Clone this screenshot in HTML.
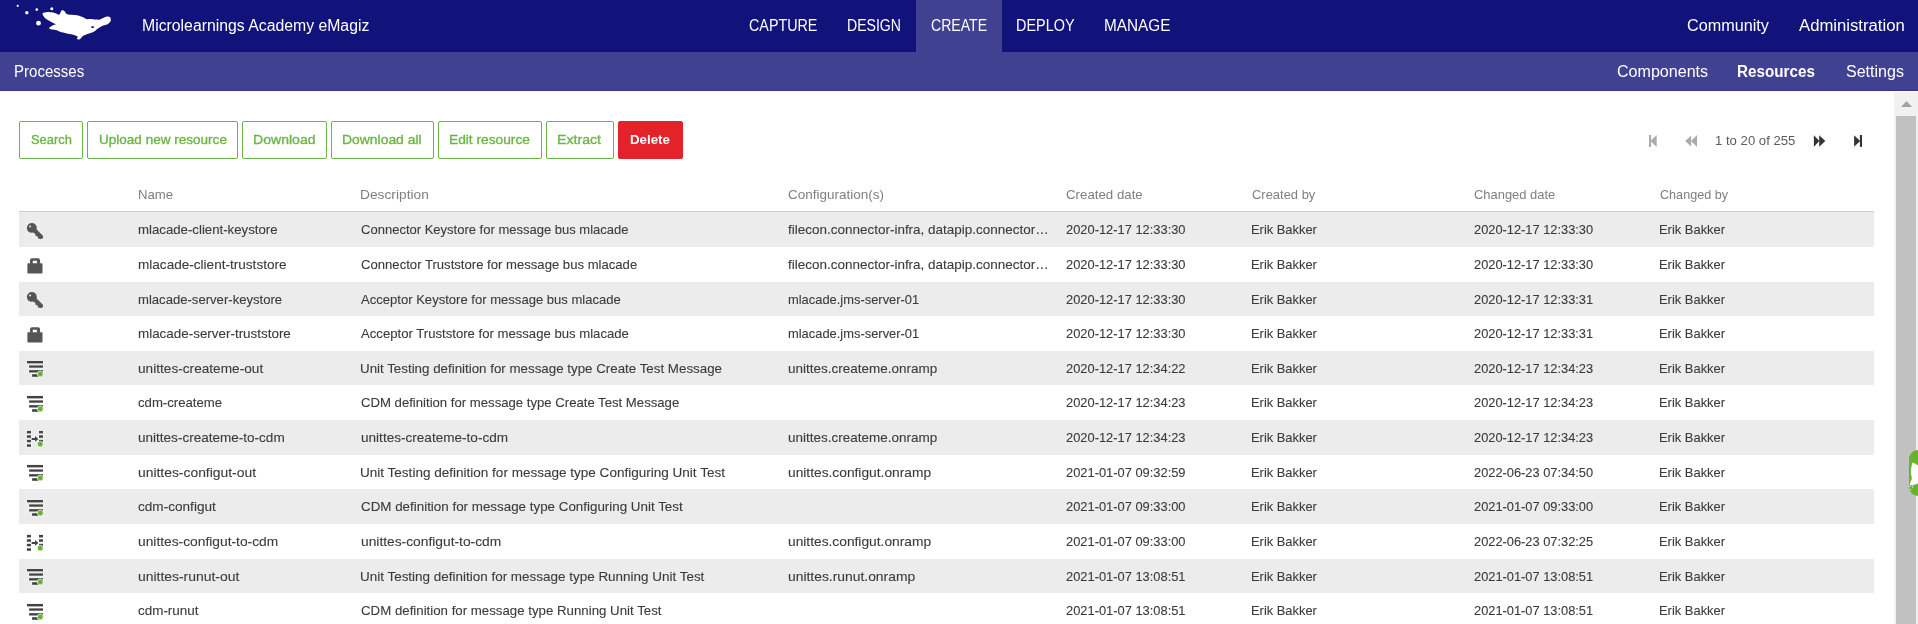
<!DOCTYPE html>
<html><head><meta charset="utf-8"><title>Resources - eMagiz</title>
<style>
html,body{margin:0;padding:0;width:1918px;height:624px;overflow:hidden;background:#fff;}
body{position:relative;font-family:"Liberation Sans",sans-serif;}
.t{position:absolute;white-space:nowrap;transform-origin:0 0;}
#tx{position:absolute;left:0;top:0;width:1918px;height:624px;will-change:transform;}
.bar{position:absolute;left:0;width:1918px;}
.btn{position:absolute;top:121px;height:38px;box-sizing:border-box;border:1.6px solid #6ab545;border-radius:2px;}
.row{position:absolute;left:19px;width:1855px;background:#ececec;}
.ic{position:absolute;overflow:visible;}
.s0{font-size:16px;line-height:16px;font-weight:400;color:#fff;}
.s1{font-size:16px;line-height:16px;font-weight:700;color:#fff;}
.s2{font-size:13.5px;line-height:13.5px;font-weight:400;color:#6ab545;-webkit-text-stroke:0.35px #6ab545;}
.s3{font-size:13.5px;line-height:13.5px;font-weight:700;color:#fff;}
.s4{font-size:13px;line-height:13px;font-weight:400;color:#5c5c5c;}
.s5{font-size:13px;line-height:13px;font-weight:400;color:#7f7f7f;}
.s6{font-size:13px;line-height:13px;font-weight:400;color:#3b3b3b;-webkit-text-stroke:0.1px #3b3b3b;}
</style></head><body>
<div class="bar" style="top:0;height:52px;background:#11127a"></div>
<div class="bar" style="top:52px;height:39px;background:#414191"></div>
<div class="bar" style="top:90px;height:1px;background:#37378c"></div>
<div style="position:absolute;left:916px;top:0;width:86px;height:52px;background:#414191"></div>
<svg style="position:absolute;left:0;top:0" width="130" height="52" viewBox="0 0 130 52">
<g fill="#fff">
<circle cx="17.7" cy="5.8" r="1.1"/><circle cx="26.8" cy="12.7" r="1.7"/><circle cx="36.8" cy="9.6" r="1.3"/><circle cx="51.8" cy="8.75" r="1.5"/><circle cx="38.5" cy="23.2" r="2.4"/>
<path d="M42.50,13.75 C42.70,13.30 43.23,12.81 44.20,12.50 C45.17,12.19 46.78,11.90 48.30,11.90 C49.82,11.90 51.77,12.12 53.30,12.50 C54.83,12.88 56.48,13.85 57.50,14.20 C58.52,14.55 58.88,14.93 59.40,14.60 C59.92,14.27 60.25,12.88 60.60,12.20 C60.95,11.52 61.05,10.82 61.50,10.50 C61.95,10.18 62.68,10.07 63.30,10.30 C63.92,10.53 64.63,11.28 65.20,11.90 C65.77,12.52 65.77,13.52 66.70,14.00 C67.63,14.48 69.13,14.60 70.80,14.80 C72.47,15.00 74.75,14.85 76.70,15.20 C78.65,15.55 80.83,16.27 82.50,16.90 C84.17,17.53 85.45,18.63 86.70,19.00 C87.95,19.37 88.48,19.00 90.00,19.10 C91.52,19.20 94.13,19.53 95.80,19.60 C97.47,19.67 98.60,19.85 100.00,19.50 C101.40,19.15 102.82,17.98 104.20,17.50 C105.58,17.02 107.25,16.52 108.30,16.60 C109.35,16.68 110.12,17.23 110.50,18.00 C110.88,18.77 111.10,20.22 110.60,21.25 C110.10,22.28 108.85,23.44 107.50,24.20 C106.15,24.96 104.03,25.12 102.50,25.80 C100.97,26.48 99.68,27.35 98.30,28.30 C96.92,29.25 95.87,30.59 94.20,31.50 C92.53,32.41 90.12,33.03 88.30,33.75 C86.48,34.47 84.47,35.11 83.30,35.80 C82.12,36.49 82.01,37.27 81.25,37.90 C80.49,38.53 79.47,39.50 78.75,39.60 C78.03,39.70 77.11,39.02 76.90,38.50 C76.69,37.98 78.23,37.18 77.50,36.50 C76.77,35.82 74.30,34.92 72.50,34.40 C70.70,33.88 68.78,33.83 66.70,33.40 C64.62,32.97 61.67,32.32 60.00,31.80 C58.33,31.28 58.08,30.67 56.70,30.30 C55.32,29.93 52.95,29.88 51.70,29.60 C50.45,29.32 49.52,28.98 49.20,28.60 C48.88,28.22 49.25,27.83 49.80,27.30 C50.35,26.77 51.50,25.92 52.50,25.40 C53.50,24.88 55.67,24.62 55.80,24.20 C55.93,23.78 54.40,23.47 53.30,22.90 C52.20,22.33 50.58,21.63 49.20,20.80 C47.82,19.97 46.03,18.83 45.00,17.90 C43.97,16.97 43.42,15.89 43.00,15.20 C42.58,14.51 42.30,14.20 42.50,13.75Z"/>
</g>
<ellipse cx="92.6" cy="27.1" rx="1.6" ry="0.85" fill="#11127a"/>
</svg>

<div class="btn" style="left:19px;width:64px"></div>
<div class="btn" style="left:87px;width:151px"></div>
<div class="btn" style="left:242px;width:85px"></div>
<div class="btn" style="left:331px;width:103px"></div>
<div class="btn" style="left:438px;width:104px"></div>
<div class="btn" style="left:546px;width:68px"></div>
<div class="btn" style="left:618px;width:65px;background:#e3222a;border-color:#e3222a"></div>
<svg style="position:absolute;left:1640px;top:128px" width="230" height="26" viewBox="1640 128 230 26">
<g fill="#ababab"><rect x="1649" y="135" width="2.1" height="11.9"/><path d="M1650.4 141 L1656.7 135 V146.9 Z"/>
<path d="M1685.2 141 L1691.2 135.6 V146.5 Z"/><path d="M1691 141 L1697 135 V146.9 Z"/></g>
<g fill="#333"><path d="M1813.9 135.3 L1819.4 141 L1813.9 146.8 Z"/><path d="M1819.2 135.3 L1825.3 141 L1819.2 146.8 Z"/>
<path d="M1854.1 135.3 L1860.2 141 L1854.1 146.8 Z"/><rect x="1859.9" y="135" width="2.1" height="11.9"/></g>
</svg>
<div style="position:absolute;left:19px;top:211px;width:1855px;height:1px;background:#cccfd5"></div>
<div class="row" style="top:212.300px;height:34.636px"></div>
<div class="row" style="top:281.572px;height:34.636px"></div>
<div class="row" style="top:350.844px;height:34.636px"></div>
<div class="row" style="top:420.116px;height:34.636px"></div>
<div class="row" style="top:489.388px;height:34.636px"></div>
<div class="row" style="top:558.660px;height:34.636px"></div>
<svg class="ic" style="left:19px;top:213px" width="30" height="35" viewBox="0 0.35 30 35"><g fill="#555555"><circle cx="12.85" cy="15.25" r="4.95"/><path d="M14.3 13.6 L23.9 23.1 L24.1 25.4 L21.6 26.6 L20.7 25.9 L19.9 26.3 L18.7 25.1 L19.0 24.4 L18.0 23.4 L17.3 23.7 L16.3 22.7 L16.6 21.9 L11.3 16.7 Z"/></g><circle cx="11.15" cy="13.85" r="1.05" fill="#e6e6e6"/></svg>
<svg class="ic" style="left:19px;top:247px" width="30" height="35" viewBox="0 0.15 30 35"><g fill="#555555"><rect x="8.4" y="16.5" width="15.1" height="10.1" rx="0.8"/><path d="M11 17 V13.3 Q11 11.3 13 11.3 H19 Q21 11.3 21 13.3 V17 H17.9 V13.8 H13.8 V17 Z"/></g></svg>
<svg class="ic" style="left:19px;top:282px" width="30" height="35" viewBox="0 0.35 30 35"><g fill="#555555"><circle cx="12.85" cy="15.25" r="4.95"/><path d="M14.3 13.6 L23.9 23.1 L24.1 25.4 L21.6 26.6 L20.7 25.9 L19.9 26.3 L18.7 25.1 L19.0 24.4 L18.0 23.4 L17.3 23.7 L16.3 22.7 L16.6 21.9 L11.3 16.7 Z"/></g><circle cx="11.15" cy="13.85" r="1.05" fill="#e6e6e6"/></svg>
<svg class="ic" style="left:19px;top:316px" width="30" height="35" viewBox="0 0.15 30 35"><g fill="#555555"><rect x="8.4" y="16.5" width="15.1" height="10.1" rx="0.8"/><path d="M11 17 V13.3 Q11 11.3 13 11.3 H19 Q21 11.3 21 13.3 V17 H17.9 V13.8 H13.8 V17 Z"/></g></svg>
<svg class="ic" style="left:19px;top:351px" width="30" height="35" viewBox="0 0.25 30 35"><g fill="#434343" stroke="#fff" stroke-width="0.9" paint-order="stroke"><rect x="8" y="10.2" width="16" height="2.45"/><rect x="10.1" y="14.65" width="13.9" height="2.3"/><rect x="10.1" y="19.4" width="13.9" height="2.35"/><rect x="13.1" y="23.45" width="6" height="2.6"/></g><circle cx="21.3" cy="23.2" r="2.95" fill="#66b32e" stroke="#fff" stroke-width="0.7"/></svg>
<svg class="ic" style="left:19px;top:386px" width="30" height="35" viewBox="0 0.25 30 35"><g fill="#434343" stroke="#fff" stroke-width="0.9" paint-order="stroke"><rect x="8" y="10.2" width="16" height="2.45"/><rect x="10.1" y="14.65" width="13.9" height="2.3"/><rect x="10.1" y="19.4" width="13.9" height="2.35"/><rect x="13.1" y="23.45" width="6" height="2.6"/></g><circle cx="21.3" cy="23.2" r="2.95" fill="#66b32e" stroke="#fff" stroke-width="0.7"/></svg>
<svg class="ic" style="left:19px;top:420px" width="30" height="35" viewBox="0 -0.0 30 35"><g fill="#434343" stroke="#fff" stroke-width="0.9" paint-order="stroke"><rect x="7.9" y="10.9" width="4.1" height="2.5"/><rect x="7.9" y="15.3" width="4.1" height="2.5"/><rect x="7.9" y="19.8" width="4.1" height="2.5"/><rect x="7.9" y="24.3" width="4.1" height="2.5"/><rect x="20" y="10.9" width="4" height="2.5"/><rect x="20" y="15.3" width="4" height="2.5"/><rect x="20" y="19.8" width="4" height="2.5"/><path d="M12.6 18 H16 V16 L19.4 18.9 L16 21.7 V19.9 H12.6 Z"/></g><circle cx="21.2" cy="24.1" r="2.95" fill="#66b32e" stroke="#fff" stroke-width="0.7"/></svg>
<svg class="ic" style="left:19px;top:455px" width="30" height="35" viewBox="0 0.25 30 35"><g fill="#434343" stroke="#fff" stroke-width="0.9" paint-order="stroke"><rect x="8" y="10.2" width="16" height="2.45"/><rect x="10.1" y="14.65" width="13.9" height="2.3"/><rect x="10.1" y="19.4" width="13.9" height="2.35"/><rect x="13.1" y="23.45" width="6" height="2.6"/></g><circle cx="21.3" cy="23.2" r="2.95" fill="#66b32e" stroke="#fff" stroke-width="0.7"/></svg>
<svg class="ic" style="left:19px;top:490px" width="30" height="35" viewBox="0 0.25 30 35"><g fill="#434343" stroke="#fff" stroke-width="0.9" paint-order="stroke"><rect x="8" y="10.2" width="16" height="2.45"/><rect x="10.1" y="14.65" width="13.9" height="2.3"/><rect x="10.1" y="19.4" width="13.9" height="2.35"/><rect x="13.1" y="23.45" width="6" height="2.6"/></g><circle cx="21.3" cy="23.2" r="2.95" fill="#66b32e" stroke="#fff" stroke-width="0.7"/></svg>
<svg class="ic" style="left:19px;top:524px" width="30" height="35" viewBox="0 -0.0 30 35"><g fill="#434343" stroke="#fff" stroke-width="0.9" paint-order="stroke"><rect x="7.9" y="10.9" width="4.1" height="2.5"/><rect x="7.9" y="15.3" width="4.1" height="2.5"/><rect x="7.9" y="19.8" width="4.1" height="2.5"/><rect x="7.9" y="24.3" width="4.1" height="2.5"/><rect x="20" y="10.9" width="4" height="2.5"/><rect x="20" y="15.3" width="4" height="2.5"/><rect x="20" y="19.8" width="4" height="2.5"/><path d="M12.6 18 H16 V16 L19.4 18.9 L16 21.7 V19.9 H12.6 Z"/></g><circle cx="21.2" cy="24.1" r="2.95" fill="#66b32e" stroke="#fff" stroke-width="0.7"/></svg>
<svg class="ic" style="left:19px;top:559px" width="30" height="35" viewBox="0 0.25 30 35"><g fill="#434343" stroke="#fff" stroke-width="0.9" paint-order="stroke"><rect x="8" y="10.2" width="16" height="2.45"/><rect x="10.1" y="14.65" width="13.9" height="2.3"/><rect x="10.1" y="19.4" width="13.9" height="2.35"/><rect x="13.1" y="23.45" width="6" height="2.6"/></g><circle cx="21.3" cy="23.2" r="2.95" fill="#66b32e" stroke="#fff" stroke-width="0.7"/></svg>
<svg class="ic" style="left:19px;top:594px" width="30" height="35" viewBox="0 0.25 30 35"><g fill="#434343" stroke="#fff" stroke-width="0.9" paint-order="stroke"><rect x="8" y="10.2" width="16" height="2.45"/><rect x="10.1" y="14.65" width="13.9" height="2.3"/><rect x="10.1" y="19.4" width="13.9" height="2.35"/><rect x="13.1" y="23.45" width="6" height="2.6"/></g><circle cx="21.3" cy="23.2" r="2.95" fill="#66b32e" stroke="#fff" stroke-width="0.7"/></svg>
<div style="position:absolute;left:1894px;top:92px;width:24px;height:532px;background:#f1f1f1"></div>
<svg style="position:absolute;left:1894px;top:92px" width="24" height="24"><path d="M7 15 L12.5 9 L18 15 Z" fill="#a3a3a3"/></svg>
<div style="position:absolute;left:1896px;top:116px;width:20px;height:508px;background:#c1c1c1"></div>
<div style="position:absolute;left:1909px;top:450px;width:18px;height:46px;border-radius:9px;background:#66b32e"></div>
<svg style="position:absolute;left:1909px;top:450px" width="9" height="46"><g fill="#fff"><path d="M3.5 12.5 L6 13.6 L9 15.4 L9 33.5 L6 34.6 L3.5 35.6 L0.7 34.9 L1.4 32 L2.6 29.5 L2.8 27.7 L2.1 24.5 L1.8 21.9 L2.1 18.5 L2.5 16.1 Z"/><circle cx="0.9" cy="36.4" r="0.6"/><circle cx="3.5" cy="37.1" r="0.6"/><circle cx="1.6" cy="39.5" r="0.55"/></g></svg>
<div id="tx">
<div class="t s0" style="left:141.81px;top:17.50px;transform:scaleX(0.9870)">Microlearnings Academy eMagiz</div>
<div class="t s0" style="left:748.90px;top:17.50px;transform:scaleX(0.8947)">CAPTURE</div>
<div class="t s0" style="left:846.82px;top:17.50px;transform:scaleX(0.8798)">DESIGN</div>
<div class="t s0" style="left:931.00px;top:17.50px;transform:scaleX(0.8804)">CREATE</div>
<div class="t s0" style="left:1016.10px;top:17.50px;transform:scaleX(0.9013)">DEPLOY</div>
<div class="t s0" style="left:1103.94px;top:17.50px;transform:scaleX(0.9576)">MANAGE</div>
<div class="t s0" style="left:1686.60px;top:17.50px;transform:scaleX(1.0123)">Community</div>
<div class="t s0" style="left:1798.50px;top:17.50px;transform:scaleX(1.0430)">Administration</div>
<div class="t s0" style="left:13.86px;top:64.40px;transform:scaleX(0.9404)">Processes</div>
<div class="t s0" style="left:1616.70px;top:64.40px;transform:scaleX(1.0042)">Components</div>
<div class="t s1" style="left:1737.25px;top:64.40px;transform:scaleX(0.9515)">Resources</div>
<div class="t s0" style="left:1846.00px;top:64.40px;transform:scaleX(1.0015)">Settings</div>
<div class="t s2" style="left:30.80px;top:132.72px;transform:scaleX(0.9558)">Search</div>
<div class="t s2" style="left:98.60px;top:132.72px;transform:scaleX(1.0027)">Upload new resource</div>
<div class="t s2" style="left:253.36px;top:132.72px;transform:scaleX(1.0422)">Download</div>
<div class="t s2" style="left:342.37px;top:132.72px;transform:scaleX(1.0302)">Download all</div>
<div class="t s2" style="left:449.18px;top:132.72px;transform:scaleX(1.0176)">Edit resource</div>
<div class="t s2" style="left:557.15px;top:132.72px;transform:scaleX(1.0470)">Extract</div>
<div class="t s3" style="left:629.70px;top:132.72px;transform:scaleX(0.9851)">Delete</div>
<div class="t s4" style="left:1715.40px;top:134.45px;transform:scaleX(1.0116)">1 to 20 of 255</div>
<div class="t s5" style="left:137.74px;top:188.05px;transform:scaleX(1.0120)">Name</div>
<div class="t s5" style="left:360.14px;top:188.05px;transform:scaleX(1.0581)">Description</div>
<div class="t s5" style="left:787.50px;top:188.05px;transform:scaleX(1.0385)">Configuration(s)</div>
<div class="t s5" style="left:1065.90px;top:188.05px;transform:scaleX(1.0209)">Created date</div>
<div class="t s5" style="left:1251.50px;top:188.05px;transform:scaleX(0.9955)">Created by</div>
<div class="t s5" style="left:1474.40px;top:188.05px;transform:scaleX(0.9945)">Changed date</div>
<div class="t s5" style="left:1659.50px;top:188.05px;transform:scaleX(0.9701)">Changed by</div>
<div class="t s6" style="left:138.40px;top:222.95px;transform:scaleX(1.0165)">mlacade-client-keystore</div>
<div class="t s6" style="left:361.10px;top:222.95px">Connector Keystore for message bus mlacade</div>
<div class="t s6" style="left:787.50px;top:222.95px;transform:scaleX(1.0368)">filecon.connector-infra, datapip.connector…</div>
<div class="t s6" style="left:1065.90px;top:222.95px;transform:scaleX(0.9902)">2020-12-17 12:33:30</div>
<div class="t s6" style="left:1250.51px;top:222.95px;transform:scaleX(0.9905)">Erik Bakker</div>
<div class="t s6" style="left:1474.40px;top:222.95px;transform:scaleX(0.9869)">2020-12-17 12:33:30</div>
<div class="t s6" style="left:1658.51px;top:222.95px;transform:scaleX(0.9935)">Erik Bakker</div>
<div class="t s6" style="left:138.40px;top:257.95px;transform:scaleX(1.0437)">mlacade-client-truststore</div>
<div class="t s6" style="left:361.10px;top:257.95px;transform:scaleX(1.0086)">Connector Truststore for message bus mlacade</div>
<div class="t s6" style="left:787.50px;top:257.95px;transform:scaleX(1.0368)">filecon.connector-infra, datapip.connector…</div>
<div class="t s6" style="left:1065.90px;top:257.95px;transform:scaleX(0.9902)">2020-12-17 12:33:30</div>
<div class="t s6" style="left:1250.51px;top:257.95px;transform:scaleX(0.9905)">Erik Bakker</div>
<div class="t s6" style="left:1474.40px;top:257.95px;transform:scaleX(0.9869)">2020-12-17 12:33:30</div>
<div class="t s6" style="left:1658.51px;top:257.95px;transform:scaleX(0.9935)">Erik Bakker</div>
<div class="t s6" style="left:138.40px;top:292.95px;transform:scaleX(1.0076)">mlacade-server-keystore</div>
<div class="t s6" style="left:361.10px;top:292.95px;transform:scaleX(1.0045)">Acceptor Keystore for message bus mlacade</div>
<div class="t s6" style="left:787.50px;top:292.95px;transform:scaleX(0.9926)">mlacade.jms-server-01</div>
<div class="t s6" style="left:1065.90px;top:292.95px;transform:scaleX(0.9902)">2020-12-17 12:33:30</div>
<div class="t s6" style="left:1250.51px;top:292.95px;transform:scaleX(0.9905)">Erik Bakker</div>
<div class="t s6" style="left:1474.40px;top:292.95px;transform:scaleX(0.9869)">2020-12-17 12:33:31</div>
<div class="t s6" style="left:1658.51px;top:292.95px;transform:scaleX(0.9935)">Erik Bakker</div>
<div class="t s6" style="left:138.40px;top:326.95px;transform:scaleX(1.0320)">mlacade-server-truststore</div>
<div class="t s6" style="left:361.10px;top:326.95px;transform:scaleX(1.0103)">Acceptor Truststore for message bus mlacade</div>
<div class="t s6" style="left:787.50px;top:326.95px;transform:scaleX(0.9926)">mlacade.jms-server-01</div>
<div class="t s6" style="left:1065.90px;top:326.95px;transform:scaleX(0.9902)">2020-12-17 12:33:30</div>
<div class="t s6" style="left:1250.51px;top:326.95px;transform:scaleX(0.9905)">Erik Bakker</div>
<div class="t s6" style="left:1474.40px;top:326.95px;transform:scaleX(0.9869)">2020-12-17 12:33:31</div>
<div class="t s6" style="left:1658.51px;top:326.95px;transform:scaleX(0.9935)">Erik Bakker</div>
<div class="t s6" style="left:138.40px;top:361.95px;transform:scaleX(1.0501)">unittes-createme-out</div>
<div class="t s6" style="left:360.07px;top:361.95px;transform:scaleX(1.0258)">Unit Testing definition for message type Create Test Message</div>
<div class="t s6" style="left:787.50px;top:361.95px;transform:scaleX(1.0372)">unittes.createme.onramp</div>
<div class="t s6" style="left:1065.90px;top:361.95px;transform:scaleX(0.9902)">2020-12-17 12:34:22</div>
<div class="t s6" style="left:1250.51px;top:361.95px;transform:scaleX(0.9905)">Erik Bakker</div>
<div class="t s6" style="left:1474.40px;top:361.95px;transform:scaleX(0.9869)">2020-12-17 12:34:23</div>
<div class="t s6" style="left:1658.51px;top:361.95px;transform:scaleX(0.9935)">Erik Bakker</div>
<div class="t s6" style="left:138.40px;top:395.95px;transform:scaleX(1.0127)">cdm-createme</div>
<div class="t s6" style="left:361.10px;top:395.95px;transform:scaleX(1.0108)">CDM definition for message type Create Test Message</div>
<div class="t s6" style="left:1065.90px;top:395.95px;transform:scaleX(0.9902)">2020-12-17 12:34:23</div>
<div class="t s6" style="left:1250.51px;top:395.95px;transform:scaleX(0.9905)">Erik Bakker</div>
<div class="t s6" style="left:1474.40px;top:395.95px;transform:scaleX(0.9869)">2020-12-17 12:34:23</div>
<div class="t s6" style="left:1658.51px;top:395.95px;transform:scaleX(0.9935)">Erik Bakker</div>
<div class="t s6" style="left:138.40px;top:430.95px;transform:scaleX(1.0411)">unittes-createme-to-cdm</div>
<div class="t s6" style="left:361.10px;top:430.95px;transform:scaleX(1.0439)">unittes-createme-to-cdm</div>
<div class="t s6" style="left:787.50px;top:430.95px;transform:scaleX(1.0372)">unittes.createme.onramp</div>
<div class="t s6" style="left:1065.90px;top:430.95px;transform:scaleX(0.9902)">2020-12-17 12:34:23</div>
<div class="t s6" style="left:1250.51px;top:430.95px;transform:scaleX(0.9905)">Erik Bakker</div>
<div class="t s6" style="left:1474.40px;top:430.95px;transform:scaleX(0.9869)">2020-12-17 12:34:23</div>
<div class="t s6" style="left:1658.51px;top:430.95px;transform:scaleX(0.9935)">Erik Bakker</div>
<div class="t s6" style="left:138.40px;top:465.95px;transform:scaleX(1.0671)">unittes-configut-out</div>
<div class="t s6" style="left:360.06px;top:465.95px;transform:scaleX(1.0406)">Unit Testing definition for message type Configuring Unit Test</div>
<div class="t s6" style="left:787.50px;top:465.95px;transform:scaleX(1.0585)">unittes.configut.onramp</div>
<div class="t s6" style="left:1065.90px;top:465.95px;transform:scaleX(0.9902)">2021-01-07 09:32:59</div>
<div class="t s6" style="left:1250.51px;top:465.95px;transform:scaleX(0.9905)">Erik Bakker</div>
<div class="t s6" style="left:1474.40px;top:465.95px;transform:scaleX(0.9869)">2022-06-23 07:34:50</div>
<div class="t s6" style="left:1658.51px;top:465.95px;transform:scaleX(0.9935)">Erik Bakker</div>
<div class="t s6" style="left:138.40px;top:499.95px;transform:scaleX(1.0453)">cdm-configut</div>
<div class="t s6" style="left:361.10px;top:499.95px;transform:scaleX(1.0289)">CDM definition for message type Configuring Unit Test</div>
<div class="t s6" style="left:1065.90px;top:499.95px;transform:scaleX(0.9902)">2021-01-07 09:33:00</div>
<div class="t s6" style="left:1250.51px;top:499.95px;transform:scaleX(0.9905)">Erik Bakker</div>
<div class="t s6" style="left:1474.40px;top:499.95px;transform:scaleX(0.9869)">2021-01-07 09:33:00</div>
<div class="t s6" style="left:1658.51px;top:499.95px;transform:scaleX(0.9935)">Erik Bakker</div>
<div class="t s6" style="left:138.40px;top:534.95px;transform:scaleX(1.0602)">unittes-configut-to-cdm</div>
<div class="t s6" style="left:361.10px;top:534.95px;transform:scaleX(1.0602)">unittes-configut-to-cdm</div>
<div class="t s6" style="left:787.50px;top:534.95px;transform:scaleX(1.0585)">unittes.configut.onramp</div>
<div class="t s6" style="left:1065.90px;top:534.95px;transform:scaleX(0.9902)">2021-01-07 09:33:00</div>
<div class="t s6" style="left:1250.51px;top:534.95px;transform:scaleX(0.9905)">Erik Bakker</div>
<div class="t s6" style="left:1474.40px;top:534.95px;transform:scaleX(0.9869)">2022-06-23 07:32:25</div>
<div class="t s6" style="left:1658.51px;top:534.95px;transform:scaleX(0.9935)">Erik Bakker</div>
<div class="t s6" style="left:138.40px;top:569.95px;transform:scaleX(1.0700)">unittes-runut-out</div>
<div class="t s6" style="left:360.06px;top:569.95px;transform:scaleX(1.0352)">Unit Testing definition for message type Running Unit Test</div>
<div class="t s6" style="left:787.50px;top:569.95px;transform:scaleX(1.0663)">unittes.runut.onramp</div>
<div class="t s6" style="left:1065.90px;top:569.95px;transform:scaleX(0.9902)">2021-01-07 13:08:51</div>
<div class="t s6" style="left:1250.51px;top:569.95px;transform:scaleX(0.9905)">Erik Bakker</div>
<div class="t s6" style="left:1474.40px;top:569.95px;transform:scaleX(0.9869)">2021-01-07 13:08:51</div>
<div class="t s6" style="left:1658.51px;top:569.95px;transform:scaleX(0.9935)">Erik Bakker</div>
<div class="t s6" style="left:138.40px;top:603.95px;transform:scaleX(1.0338)">cdm-runut</div>
<div class="t s6" style="left:361.10px;top:603.95px;transform:scaleX(1.0200)">CDM definition for message type Running Unit Test</div>
<div class="t s6" style="left:1065.90px;top:603.95px;transform:scaleX(0.9902)">2021-01-07 13:08:51</div>
<div class="t s6" style="left:1250.51px;top:603.95px;transform:scaleX(0.9905)">Erik Bakker</div>
<div class="t s6" style="left:1474.40px;top:603.95px;transform:scaleX(0.9869)">2021-01-07 13:08:51</div>
<div class="t s6" style="left:1658.51px;top:603.95px;transform:scaleX(0.9935)">Erik Bakker</div>
</div>
</body></html>
